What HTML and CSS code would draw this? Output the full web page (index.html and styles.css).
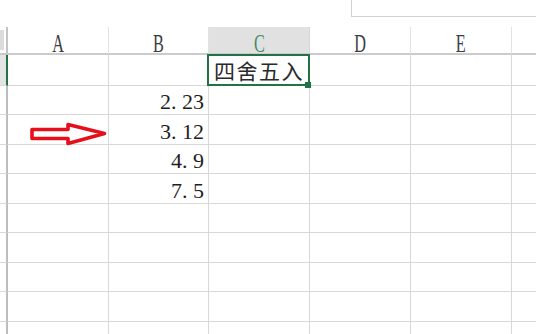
FILE: index.html
```html
<!DOCTYPE html>
<html lang="zh-CN">
<head>
<meta charset="utf-8">
<title>Sheet</title>
<link rel="stylesheet" href="styles.css">
</head>
<body>
<div class="app">
  <div class="topbar"><div class="namebox"></div></div>
  <div class="sheet">
    <div class="cell corner"></div>
    <div class="cell colhead"><span class="letter">A</span></div>
    <div class="cell colhead"><span class="letter">B</span></div>
    <div class="cell colhead selected"><span class="letter">C</span></div>
    <div class="cell colhead"><span class="letter">D</span></div>
    <div class="cell colhead"><span class="letter">E</span></div>
    <div class="cell colhead last"></div>

    <div class="cell rowhead active"></div>
    <div class="cell"></div>
    <div class="cell"></div>
    <div class="cell text active-cell"><span class="cjk">四舍五入</span><span class="handle"></span></div>
    <div class="cell"></div>
    <div class="cell"></div>
    <div class="cell last"></div>

    <div class="cell rowhead"></div>
    <div class="cell"></div>
    <div class="cell num">2<span class="dot">.</span>23</div>
    <div class="cell"></div>
    <div class="cell"></div>
    <div class="cell"></div>
    <div class="cell last"></div>

    <div class="cell rowhead"></div>
    <div class="cell"></div>
    <div class="cell num">3<span class="dot">.</span>12</div>
    <div class="cell"></div>
    <div class="cell"></div>
    <div class="cell"></div>
    <div class="cell last"></div>

    <div class="cell rowhead"></div>
    <div class="cell"></div>
    <div class="cell num">4<span class="dot">.</span>9</div>
    <div class="cell"></div>
    <div class="cell"></div>
    <div class="cell"></div>
    <div class="cell last"></div>

    <div class="cell rowhead"></div>
    <div class="cell"></div>
    <div class="cell num">7<span class="dot">.</span>5</div>
    <div class="cell"></div>
    <div class="cell"></div>
    <div class="cell"></div>
    <div class="cell last"></div>

    <div class="cell rowhead"></div>
    <div class="cell"></div><div class="cell"></div><div class="cell"></div><div class="cell"></div><div class="cell"></div><div class="cell last"></div>

    <div class="cell rowhead"></div>
    <div class="cell"></div><div class="cell"></div><div class="cell"></div><div class="cell"></div><div class="cell"></div><div class="cell last"></div>

    <div class="cell rowhead"></div>
    <div class="cell"></div><div class="cell"></div><div class="cell"></div><div class="cell"></div><div class="cell"></div><div class="cell last"></div>

    <div class="cell rowhead"></div>
    <div class="cell"></div><div class="cell"></div><div class="cell"></div><div class="cell"></div><div class="cell"></div><div class="cell last"></div>

    <div class="cell rowhead"></div>
    <div class="cell"></div><div class="cell"></div><div class="cell"></div><div class="cell"></div><div class="cell"></div><div class="cell last"></div>
  </div>
  <svg class="arrow" width="84" height="30" viewBox="28 119 84 30" aria-hidden="true">
    <polygon points="32,129.5 68,129.5 68,124.5 104.5,133.5 68,143.5 68,138.5 32,138.5" fill="none" stroke="#e6101c" stroke-width="3.6" stroke-linejoin="round"/>
  </svg>
</div>
</body>
</html>
```

FILE: styles.css
```css
html, body {
  margin: 0;
  padding: 0;
  background: #ffffff;
}

.app {
  position: relative;
  width: 536px;
  height: 334px;
  overflow: hidden;
  background: #ffffff;
}

.topbar {
  height: 27px;
  display: flex;
  justify-content: flex-end;
}

.namebox {
  width: 185px;
  height: 17px;
  box-sizing: border-box;
  border-left: 1px solid #d0d0d0;
  border-bottom: 1px solid #d0d0d0;
}

.sheet {
  display: grid;
  grid-template-columns: 8px 101px 100px 101px 101px 101px 1fr;
  grid-template-rows: 28px 31px 29px 30px 29px 30px 29px 30px 29px 30px 40px;
}

.cell {
  box-sizing: border-box;
  border-right: 1px solid #d8d8d8;
  border-bottom: 1px solid #d8d8d8;
  min-width: 0;
}

.cell.last {
  border-right: none;
}

.corner {
  border-right: 2px solid #c4c4c4;
  border-bottom: 2px solid #c8c8c8;
  background: linear-gradient(#dcdcdc, #dcdcdc) 0 3px / 4px 20px no-repeat;
}

.colhead {
  border-right-color: #e2e2e2;
  border-bottom: 2px solid #cbcbcb;
  text-align: center;
  padding-top: 4px;
  line-height: 25px;
}

.colhead.selected {
  background: #e1e1e1;
  border-right-color: #d6d6d6;
}

.letter {
  display: inline-block;
  font-family: "Liberation Serif", serif;
  font-size: 25px;
  color: #3c3c44;
  transform: scaleX(0.65);
}

.selected .letter {
  color: #3f8a68;
}

.rowhead {
  border-right: 2px solid #bdbdbd;
}

.rowhead.active {
  background: #e4e4e4;
  border-right-color: #217346;
}

.text {
  position: relative;
  display: flex;
  align-items: flex-end;
  padding-left: 5px;
  padding-bottom: 4px;
}

.cjk {
  font-family: "Noto Sans CJK SC", sans-serif;
  font-size: 21px;
  line-height: 21px;
  letter-spacing: 1.5px;
  color: #2a2a2a;
  white-space: nowrap;
}

.active-cell::after {
  content: "";
  position: absolute;
  left: -2px;
  top: -1px;
  right: -1px;
  bottom: -1px;
  border: 2px solid #217346;
  pointer-events: none;
}

.handle {
  position: absolute;
  left: 96px;
  top: 27px;
  width: 6px;
  height: 6px;
  background: #217346;
  z-index: 2;
}

.num {
  display: flex;
  align-items: flex-end;
  justify-content: flex-end;
  padding-right: 4px;
  padding-bottom: 1px;
  font-family: "Liberation Serif", serif;
  font-size: 22px;
  line-height: 22px;
  color: #1e1e1e;
  white-space: pre;
}

.dot {
  letter-spacing: 0.25em;
}

.arrow {
  position: absolute;
  left: 28px;
  top: 119px;
}
```
